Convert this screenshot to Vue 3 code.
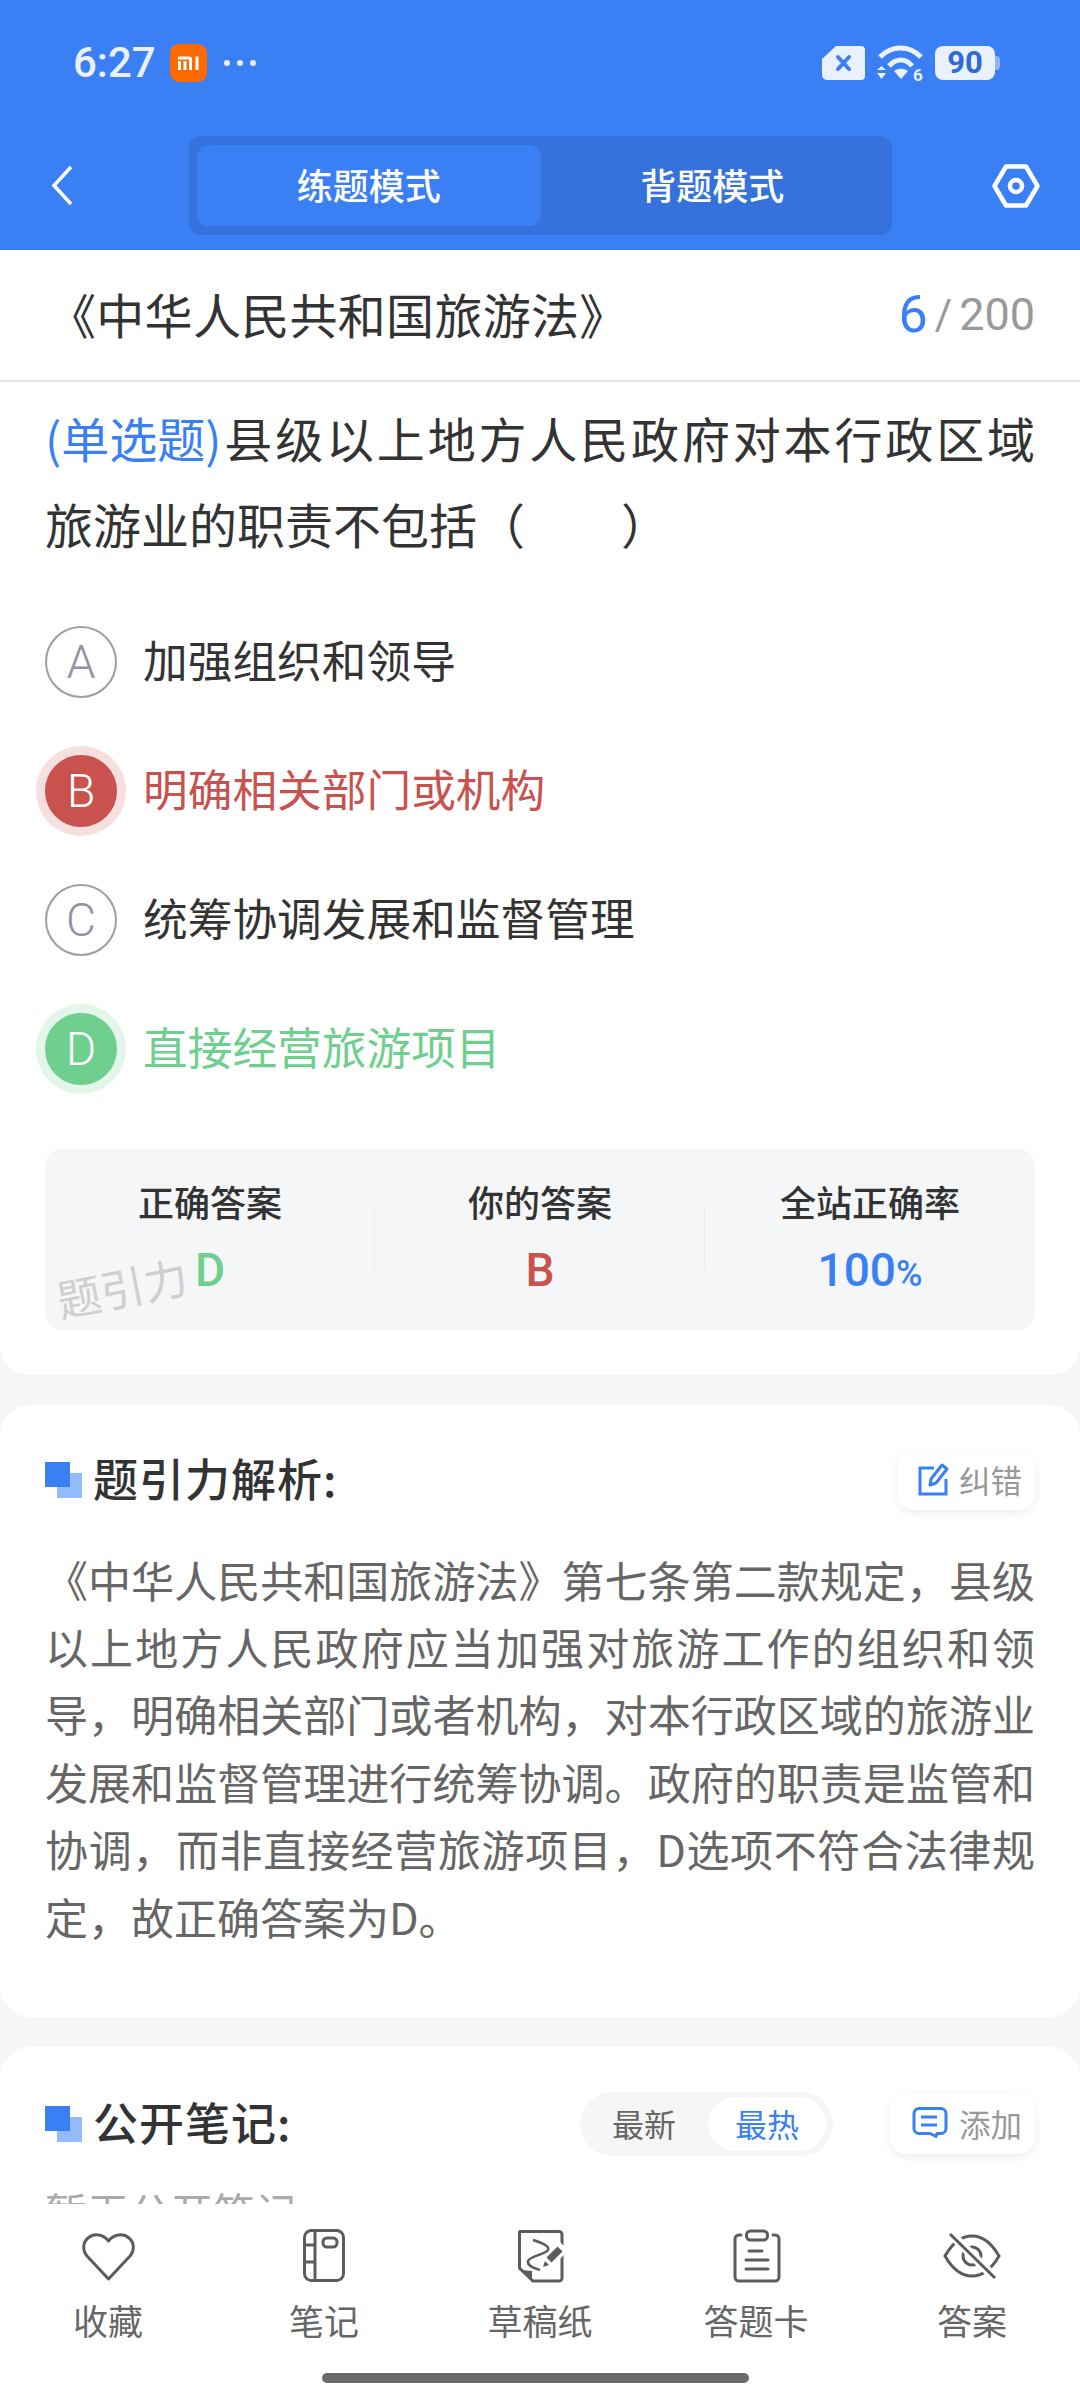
<script setup>
const options = [
  { key: 'A', text: '加强组织和领导', state: '' },
  { key: 'B', text: '明确相关部门或机构', state: 'wrong' },
  { key: 'C', text: '统筹协调发展和监督管理', state: '' },
  { key: 'D', text: '直接经营旅游项目', state: 'right' },
]
</script>

<template>
  <div class="page">
    <div class="main">
      <header class="header">
        <div class="status">
          <span class="time">6:27</span>
          <span class="mi">
            <svg width="24" height="16" viewBox="0 0 24 16"><path d="M1 1.500h11a3 3 0 0 1 3 3V15h-3V4.500H1zM1 6h3v9H1zM6.500 6h3v9h-3zM18.500 1.500h3V15h-3z" fill="#fff"/></svg>
          </span>
          <span class="dots"><i></i><i></i><i></i></span>
          <span class="status-right">
            <svg class="sim" width="43" height="34" viewBox="0 0 43 34"><path d="M14 0h25a4 4 0 0 1 4 4v26a4 4 0 0 1-4 4H5a5 5 0 0 1-5-5V13z" fill="#e9f0fe"/><path d="M16 11l11 12M27 11L16 23" stroke="#3b7ff5" stroke-width="4" stroke-linecap="round"/></svg>
            <svg class="wifi" width="46" height="36" viewBox="0 0 46 36">
              <path d="M3 12C15 0 32 0 44 12" fill="none" stroke="#e9f0fe" stroke-width="5"/>
              <path d="M12 21C19 13 29 13 35 21" fill="none" stroke="#e9f0fe" stroke-width="5"/>
              <path d="M17 26Q24 21 31 26L24 34Z" fill="#e9f0fe"/>
              <path d="M0 25l4.500-4 4.500 4zM0 28h9l-4.500 6z" fill="#e9f0fe"/>
              <text x="36" y="36" class="wifi-six">6</text>
            </svg>
            <span class="battery"><span class="battery-num">90</span><i></i></span>
          </span>
        </div>
        <nav class="nav">
          <svg class="back" width="22" height="41" viewBox="0 0 22 41"><path d="M20 2L3 20.500 20 39" fill="none" stroke="#fff" stroke-width="3.500"/></svg>
          <div class="mode">
            <span class="mode-item active">练题模式</span>
            <span class="mode-item">背题模式</span>
          </div>
          <svg class="hex" width="48" height="44" viewBox="0 0 48 44"><path d="M14 2.500h20L45.500 22 34 41.500H14L2.500 22z" fill="none" stroke="#fff" stroke-width="4.500" stroke-linejoin="round"/><circle cx="24" cy="22" r="6" fill="none" stroke="#fff" stroke-width="4.500"/></svg>
        </nav>
      </header>

      <section class="card first">
        <div class="title-row">
          <span class="title">《中华人民共和国旅游法》</span>
          <span class="count"><b>6</b><em>/</em>200</span>
        </div>
        <div class="question"><span class="qtype">(单选题)</span>县级以上地方人民政府对本行政区域旅游业的职责不包括（　　）</div>
        <div class="options">
          <div v-for="o in options" :key="o.key" class="option" :class="o.state">
            <span class="badge">{{ o.key }}</span>
            <span class="opt-text">{{ o.text }}</span>
          </div>
        </div>
        <div class="result">
          <div class="cell">
            <span class="label">正确答案</span>
            <span class="value green">D</span>
          </div>
          <div class="cell">
            <span class="label">你的答案</span>
            <span class="value red">B</span>
          </div>
          <div class="cell">
            <span class="label">全站正确率</span>
            <span class="value blue">100<small>%</small></span>
          </div>
          <span class="watermark">题引力</span>
        </div>
      </section>

      <section class="card">
        <div class="sec-head">
          <span class="squares"><i></i><i></i></span>
          <h2>题引力解析:</h2>
          <span class="pill wide">
            <svg width="32" height="34" viewBox="0 0 32 34"><path d="M16 6H2v26h26V17" fill="none" stroke="#3b7ff5" stroke-width="3"/><path d="M12 23l1-6L24 3l5 4-11 14z" fill="none" stroke="#3b7ff5" stroke-width="3" stroke-linejoin="round"/></svg>
            纠错
          </span>
        </div>
        <p class="analysis">《中华人民共和国旅游法》第七条第二款规定，县级以上地方人民政府应当加强对旅游工作的组织和领导，明确相关部门或者机构，对本行政区域的旅游业发展和监督管理进行统筹协调。政府的职责是监管和协调，而非直接经营旅游项目，D选项不符合法律规定，故正确答案为D。</p>
      </section>

      <section class="card">
        <div class="sec-head notes">
          <span class="squares"><i></i><i></i></span>
          <h2>公开笔记:</h2>
          <div class="sort">
            <span class="sort-item">最新</span>
            <span class="sort-item on">最热</span>
          </div>
          <span class="pill">
            <svg width="36" height="32" viewBox="0 0 36 32"><path d="M7 1.500h22a5 5 0 0 1 5 5v15a5 5 0 0 1-5 5h-4l-1 3-6-3H7a5 5 0 0 1-5-5v-15a5 5 0 0 1 5-5z" fill="none" stroke="#3b7ff5" stroke-width="3" stroke-linejoin="round"/><path d="M9 10h16M9 18h16" stroke="#3b7ff5" stroke-width="3"/></svg>
            添加
          </span>
        </div>
        <p class="empty">暂无公开笔记</p>
      </section>
    </div>

    <footer class="tabs">
      <div class="tab">
        <svg width="56" height="56" viewBox="0 0 56 56"><path d="M28.500 51L7 28C2 22 3 14 8 10c6-5 15-4 20.500 3C34 6 43 5 49 10c5 4 6 12 1 18z" fill="none" stroke="#5c5c5c" stroke-width="3" stroke-linejoin="round"/></svg>
        <span>收藏</span>
      </div>
      <div class="tab">
        <svg width="56" height="56" viewBox="0 0 56 56" fill="none" stroke="#5c5c5c" stroke-width="3"><rect x="8.500" y="2.500" width="39" height="50" rx="7"/><path d="M19 3v49M8 17h11M8 34h11"/><rect x="27" y="10" width="14" height="9" rx="4"/></svg>
        <span>笔记</span>
      </div>
      <div class="tab">
        <svg width="56" height="56" viewBox="0 0 56 56" fill="none" stroke="#5c5c5c" stroke-width="3"><path d="M8 3.500h39a3 3 0 0 1 3 3V50a3 3 0 0 1-3 3H21L7.500 40V4z"/><path d="M9 42l11 1v11z" fill="#5c5c5c" stroke="none"/><path d="M21 12C30 15 38 18 36 22 34 26 18 28 16 33 15 38 22 40 28 42" stroke-width="2.500"/><path d="M52 18L33 38" stroke="#fff" stroke-width="12"/><path d="M48 21L37 32" stroke-width="7"/><path d="M31 39l2-6 4 4z" fill="#5c5c5c" stroke="none"/></svg>
        <span>草稿纸</span>
      </div>
      <div class="tab">
        <svg width="56" height="56" viewBox="0 0 56 56" fill="none" stroke="#5c5c5c" stroke-width="3" stroke-linecap="round"><path d="M13 7h-2a4 4 0 0 0-4 4v38a4 4 0 0 0 4 4h36a4 4 0 0 0 4-4V11a4 4 0 0 0-4-4h-2"/><rect x="18.500" y="3" width="21" height="9" rx="4"/><path d="M21 23h13M18 32h22M18 41h22"/></svg>
        <span>答题卡</span>
      </div>
      <div class="tab">
        <svg width="58" height="56" viewBox="0 0 58 56" fill="none" stroke="#5c5c5c" stroke-width="3"><path d="M2 28C10 14 20 8 29 8s19 6 27 20C48 42 38 48 29 48S10 42 2 28z"/><circle cx="29" cy="28" r="9"/><path d="M5 3l48 48" stroke="#fff" stroke-width="9"/><path d="M7 6l45 44"/></svg>
        <span>答案</span>
      </div>
    </footer>
    <div class="home"></div>
  </div>
</template>

<style scoped>
.page {
  position: relative;
  width: 1080px;
  height: 2400px;
  display: flex;
  flex-direction: column;
  overflow: hidden;
  background: #f5f6f8;
  font-family: "Noto Sans CJK SC", "Noto Sans", sans-serif;
  color: #333;
}
.main {
  flex: 1;
  min-height: 0;
  overflow: hidden;
}
.header {
  height: 250px;
  background: #3b7ff5;
  box-sizing: border-box;
  padding-top: 44px;
}
.status {
  height: 38px;
  display: flex;
  align-items: center;
  padding: 0 85px 0 73px;
}
.time {
  font-family: "Roboto", sans-serif;
  font-weight: 500;
  font-size: 42px;
  line-height: 38px;
  color: #e9f0fe;
  width: 97px;
}
.mi {
  width: 37px;
  height: 38px;
  border-radius: 9px;
  background: #ff6a00;
  display: flex;
  align-items: center;
  justify-content: center;
}
.dots {
  display: flex;
  gap: 7px;
  margin-left: 17px;
}
.dots i {
  width: 6px;
  height: 6px;
  border-radius: 50%;
  background: #e9f0fe;
}
.status-right {
  margin-left: auto;
  display: flex;
  align-items: center;
  gap: 12px;
}
.wifi {
  overflow: visible;
}
.wifi-six {
  font-family: "Roboto", sans-serif;
  font-size: 17px;
  font-weight: 700;
  fill: #e9f0fe;
}
.battery {
  position: relative;
  width: 60px;
  height: 34px;
  border-radius: 8px;
  background: #e9f0fe;
  display: flex;
  align-items: center;
  justify-content: center;
}
.battery-num {
  font-family: "Roboto", sans-serif;
  font-size: 31px;
  font-weight: 700;
  color: #2f6bd6;
  line-height: 34px;
}
.battery i {
  position: absolute;
  right: -5px;
  top: 10px;
  width: 5px;
  height: 14px;
  border-radius: 0 4px 4px 0;
  background: #8fb5f9;
}
.nav {
  height: 99px;
  margin-top: 54px;
  padding-left: 51px;
  display: flex;
  align-items: center;
}
.mode {
  margin-left: 116px;
  width: 703px;
  height: 99px;
  box-sizing: border-box;
  padding: 9px 8px;
  background: #3572dc;
  border-radius: 12px;
  display: flex;
}
.mode-item {
  flex: 1;
  display: flex;
  align-items: center;
  justify-content: center;
  box-sizing: border-box;
  padding-bottom: 3px;
  border-radius: 12px;
  font-size: 36px;
  font-weight: 500;
  color: #fff;
}
.mode-item.active {
  background: #3b7ff5;
}
.hex {
  margin-left: 100px;
}
.card {
  background: #fff;
  border-radius: 30px;
  padding: 45px;
  margin-top: 30px;
}
.card.first {
  margin-top: 0;
  border-radius: 0 0 30px 30px;
  padding: 0 45px 45px;
}
.title-row {
  height: 130px;
  margin: 0 -45px;
  padding: 0 45px 0 48px;
  border-bottom: 2px solid #e6e6e6;
  box-sizing: content-box;
  display: flex;
  align-items: center;
  justify-content: space-between;
}
.title {
  font-size: 48px;
  letter-spacing: 0.3px;
  padding-bottom: 5px;
  color: #333;
}
.count {
  font-family: "Roboto", sans-serif;
  font-size: 45px;
  line-height: 60px;
  color: #999;
  display: flex;
  align-items: center;
}
.count b {
  font-weight: 400;
  font-size: 52px;
  color: #3b7ff5;
}
.count em {
  font-style: normal;
  font-size: 42px;
  margin: 0 7px;
}
.question {
  margin-top: 11.500px;
  font-size: 48px;
  line-height: 86px;
  text-align: justify;
  color: #333;
}
.qtype {
  display: inline-block;
  color: #3b7ff5;
}
.options {
  margin-top: 31.500px;
}
.option {
  height: 129px;
  display: flex;
  align-items: center;
  gap: 26px;
}
.badge {
  width: 72px;
  height: 72px;
  box-sizing: border-box;
  border: 2px solid #9a9eab;
  border-radius: 50%;
  display: flex;
  align-items: center;
  justify-content: center;
  font-family: "Roboto", sans-serif;
  font-weight: 300;
  font-size: 46px;
  color: #8f93a3;
}
.opt-text {
  font-size: 44.700px;
  padding-bottom: 6px;
  color: #333;
}
.option.wrong .badge {
  background: #c9524f;
  border-color: #c9524f;
  color: #fff;
  box-shadow: 0 0 0 9px #f6dfdf;
}
.option.wrong .opt-text {
  color: #c9524f;
}
.option.right .badge {
  background: #6fcf8e;
  border-color: #6fcf8e;
  color: #fff;
  box-shadow: 0 0 0 9px #e3f6e9;
}
.option.right .opt-text {
  color: #6fcf8e;
}
.result {
  position: relative;
  margin-top: 36px;
  height: 181px;
  border-radius: 16px;
  background: #f5f6f8;
  display: grid;
  grid-template-columns: repeat(3, 1fr);
}
.cell {
  position: relative;
  display: flex;
  flex-direction: column;
  align-items: center;
  padding-top: 26px;
}
.cell + .cell::before {
  content: "";
  position: absolute;
  left: -1px;
  top: 60px;
  height: 60px;
  width: 1px;
  background: #e9ebee;
}
.label {
  font-size: 36px;
  line-height: 52px;
  font-weight: 500;
  color: #333;
}
.value {
  margin-top: 16px;
  font-family: "Roboto", sans-serif;
  font-size: 46px;
  line-height: 54px;
  font-weight: 500;
}
.value small {
  font-size: 36px;
}
.green { color: #6fcf8e; }
.red { color: #c9524f; }
.blue { color: #3b7ff5; }
.watermark {
  position: absolute;
  left: 12px;
  top: 125px;
  font-size: 44px;
  line-height: 50px;
  color: #cfcfcf;
  transform: rotate(-11deg);
  transform-origin: left center;
}
.sec-head {
  height: 60px;
  display: flex;
  align-items: center;
}
.sec-head.notes {
  height: 64px;
}
.squares {
  position: relative;
  width: 37px;
  height: 36px;
  flex: none;
}
.squares i {
  position: absolute;
  width: 25px;
  height: 25px;
}
.squares i:first-child {
  left: 12px;
  top: 11px;
  background: #93bbfa;
}
.squares i:last-child {
  left: 0;
  top: 0;
  background: #3b7ff5;
}
h2 {
  margin: 0 0 0 11px;
  padding-bottom: 5px;
  font-size: 45px;
  line-height: 60px;
  letter-spacing: 1px;
  font-weight: 500;
  color: #333;
}
.pill {
  margin-left: auto;
  height: 60px;
  width: 145px;
  box-sizing: border-box;
  padding: 0 0 3px 22px;
  display: flex;
  align-items: center;
  gap: 11px;
  background: #fff;
  border-radius: 16px;
  box-shadow: 0 3px 10px rgba(0, 0, 0, 0.07);
  font-size: 31.500px;
  color: #999;
  flex: none;
}
.pill.wide {
  width: 138px;
  padding-left: 21px;
  gap: 9px;
}
.sort {
  margin-left: auto;
  width: 253px;
  height: 64px;
  box-sizing: border-box;
  padding: 5px 7px 5px 0;
  border-radius: 32px;
  background: #f6f6f6;
  display: flex;
}
.sort + .pill {
  margin-left: 57px;
}
.sort-item {
  flex: none;
  width: 128px;
  box-sizing: border-box;
  padding-bottom: 2px;
  display: flex;
  align-items: center;
  justify-content: center;
  font-size: 32px;
  color: #666;
}
.sort-item.on {
  width: 118px;
  background: #fff;
  border-radius: 27px;
  color: #3b7ff5;
}
.analysis {
  margin: 35.500px 0 22.500px;
  font-size: 43px;
  line-height: 67.400px;
  color: #666;
  text-align: justify;
}
.empty {
  margin: 30px 0 0;
  font-size: 42px;
  line-height: 50px;
  color: #aaa;
}
.tabs {
  height: 196px;
  flex: none;
  box-sizing: border-box;
  padding-top: 24px;
  background: #fff;
  display: grid;
  grid-template-columns: repeat(5, 216px);
}
.tab {
  display: flex;
  flex-direction: column;
  align-items: center;
  font-size: 35px;
  line-height: 46px;
  color: #666;
}
.tab span {
  margin-top: 13px;
}
.home {
  position: absolute;
  left: 322px;
  top: 2373px;
  width: 427px;
  height: 10px;
  border-radius: 5px;
  background: #6b6b6b;
}
</style>

<style>
html, body { margin: 0; background: #fff; }
</style>
